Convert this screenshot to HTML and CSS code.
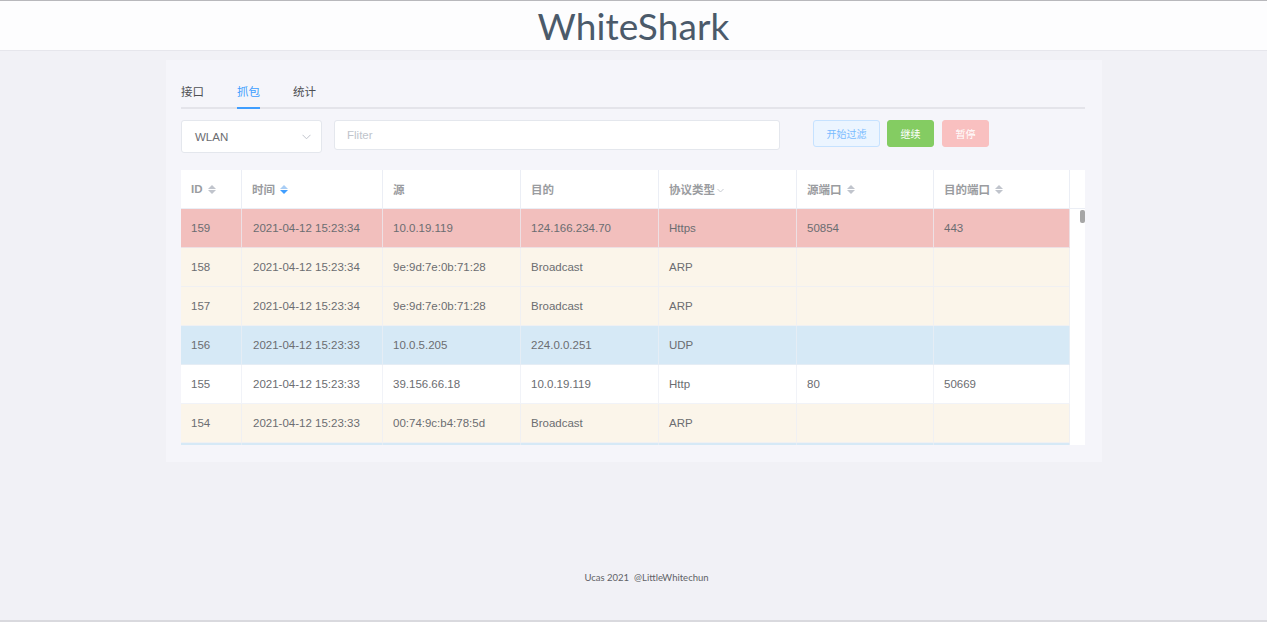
FILE: index.html
```html
<!DOCTYPE html>
<html lang="zh">
<head>
<meta charset="utf-8">
<title>WhiteShark</title>
<link rel="stylesheet" href="styles.css">
</head>
<body>
<header class="topbar">
  <h1 class="brand">WhiteShark</h1>
</header>
<main class="main">
  <section class="card">
    <nav class="tabs">
      <span class="tab">接口</span>
      <span class="tab active">抓包</span>
      <span class="tab">统计</span>
    </nav>
    <div class="toolbar">
      <div class="select">
        <span>WLAN</span>
        <svg class="chev" width="9" height="6" viewBox="0 0 9 6"><path d="M0.5 0.8 L4.5 4.8 L8.5 0.8" fill="none" stroke="#c0c4cc" stroke-width="1"/></svg>
      </div>
      <div class="input"><span class="ph">Fliter</span></div>
      <button class="btn btn-filter">开始过滤</button>
      <button class="btn btn-go">继续</button>
      <button class="btn btn-stop">暂停</button>
    </div>
    <div class="table">
      <div class="thead">
        <div class="th c1">ID <i class="sort"><b class="up"></b><b class="down"></b></i></div>
        <div class="th c2">时间 <i class="sort"><b class="up"></b><b class="down on"></b></i></div>
        <div class="th c3">源</div>
        <div class="th c4">目的</div>
        <div class="th c5">协议类型<svg class="fchev" width="7" height="5" viewBox="0 0 7 5"><path d="M0.5 1 L3.5 4 L6.5 1" fill="none" stroke="#c0c4cc" stroke-width="0.9"/></svg></div>
        <div class="th c6">源端口 <i class="sort"><b class="up"></b><b class="down"></b></i></div>
        <div class="th c7">目的端口 <i class="sort"><b class="up"></b><b class="down"></b></i></div>
        <div class="th gutter"></div>
      </div>
      <div class="tbody-wrap">
        <div class="tbody">
          <div class="tr red"><div class="td c1">159</div><div class="td c2">2021-04-12 15:23:34</div><div class="td c3">10.0.19.119</div><div class="td c4">124.166.234.70</div><div class="td c5">Https</div><div class="td c6">50854</div><div class="td c7">443</div></div>
          <div class="tr cream"><div class="td c1">158</div><div class="td c2">2021-04-12 15:23:34</div><div class="td c3">9e:9d:7e:0b:71:28</div><div class="td c4">Broadcast</div><div class="td c5">ARP</div><div class="td c6"></div><div class="td c7"></div></div>
          <div class="tr cream"><div class="td c1">157</div><div class="td c2">2021-04-12 15:23:34</div><div class="td c3">9e:9d:7e:0b:71:28</div><div class="td c4">Broadcast</div><div class="td c5">ARP</div><div class="td c6"></div><div class="td c7"></div></div>
          <div class="tr blue"><div class="td c1">156</div><div class="td c2">2021-04-12 15:23:33</div><div class="td c3">10.0.5.205</div><div class="td c4">224.0.0.251</div><div class="td c5">UDP</div><div class="td c6"></div><div class="td c7"></div></div>
          <div class="tr white"><div class="td c1">155</div><div class="td c2">2021-04-12 15:23:33</div><div class="td c3">39.156.66.18</div><div class="td c4">10.0.19.119</div><div class="td c5">Http</div><div class="td c6">80</div><div class="td c7">50669</div></div>
          <div class="tr cream"><div class="td c1">154</div><div class="td c2">2021-04-12 15:23:33</div><div class="td c3">00:74:9c:b4:78:5d</div><div class="td c4">Broadcast</div><div class="td c5">ARP</div><div class="td c6"></div><div class="td c7"></div></div>
          <div class="tr blue"><div class="td c1"></div><div class="td c2"></div><div class="td c3"></div><div class="td c4"></div><div class="td c5"></div><div class="td c6"></div><div class="td c7"></div></div>
        </div>
        <div class="track"><div class="thumb"></div></div>
      </div>
    </div>
  </section>
</main>
<footer class="footer"><span>Ucas 2021</span><span class="handle">@LittleWhitechun</span></footer>
</body>
</html>
```
FILE: styles.css
```css
* { box-sizing: border-box; }
html, body { margin: 0; padding: 0; }
body {
  height: 622px;
  background: #f1f1f6;
  border-top: 1px solid #b8b8bc;
  border-bottom: 2px solid #d9d9de;
  display: flex;
  flex-direction: column;
  font-family: "Liberation Sans", "Noto Sans CJK SC", sans-serif;
  color: #606266;
}
.topbar {
  height: 50px;
  background: #fdfdfe;
  border-bottom: 1px solid #e6e6ec;
  display: flex;
  justify-content: center;
  align-items: center;
}
.brand {
  margin: 0;
  font-family: Lato, "Open Sans", sans-serif;
  font-weight: 400;
  font-size: 37px;
  line-height: 46px;
  color: #4b5a6a;
  letter-spacing: 0.1px;
}
.main {
  padding-top: 9px;
  display: flex;
  justify-content: center;
}
.card {
  width: 936px;
  margin-left: 1px;
  background: #f5f5fa;
  padding: 17px 17px 17px 15px;
}
.tabs {
  display: flex;
  height: 32px;
  border-bottom: 2px solid #e4e4ea;
  font-size: 11.5px;
}
.tab {
  line-height: 30px;
  height: 32px;
  margin-right: 33px;
  color: #4d4f53;
  margin-bottom: -2px;
  border-bottom: 2px solid transparent;
}
.tab.active {
  color: #409eff;
  border-bottom-color: #409eff;
}
.toolbar {
  display: flex;
  align-items: flex-start;
  margin-top: 11px;
}
.select {
  width: 141px;
  height: 33px;
  background: #fff;
  border: 1px solid #e4e7ed;
  border-radius: 3px;
  display: flex;
  align-items: center;
  justify-content: space-between;
  padding: 0 10px 0 13px;
  font-size: 11.5px;
  color: #6b6d71;
}
.chev { margin-top: 1px; }
.input {
  width: 446px;
  height: 30px;
  margin-left: 12px;
  background: #fff;
  border: 1px solid #e4e7ed;
  border-radius: 3px;
  display: flex;
  align-items: center;
  padding-left: 12px;
  font-size: 11.5px;
}
.ph { color: #c0c4cc; }
.btn {
  height: 27px;
  border-radius: 3px;
  font-family: "Liberation Sans", "Noto Sans CJK SC", sans-serif;
  font-size: 10px;
  padding: 0;
  cursor: pointer;
}
.btn-filter {
  width: 67px;
  margin-left: 33px;
  background: #ecf5ff;
  border: 1px solid #c6e2ff;
  color: #79bbff;
}
.btn-go {
  width: 47px;
  margin-left: 7px;
  background: #84cc62;
  border: 1px solid #84cc62;
  color: #fff;
}
.btn-stop {
  width: 47px;
  margin-left: 8px;
  background: #f9c0c0;
  border: 1px solid #f9c0c0;
  color: #fff;
}
.table {
  margin-top: 17px;
  width: 904px;
  background: #fff;
  font-size: 11.5px;
}
.thead {
  display: flex;
  height: 39px;
}
.th {
  height: 39px;
  display: flex;
  align-items: center;
  padding-left: 10px;
  font-weight: 700;
  color: #9a9ca0;
  border-right: 1px solid #ebeef5;
  border-bottom: 1px solid #ebeef5;
  white-space: nowrap;
}
.th.gutter { width: 15px; border-right: none; padding: 0; }
.c1 { width: 61px; }
.c2 { width: 141px; }
.c3 { width: 138px; }
.c4 { width: 138px; }
.c5 { width: 138px; }
.c6 { width: 137px; }
.c7 { width: 136px; }
.td.c2 { padding-left: 11px; }
.sort {
  display: inline-flex;
  flex-direction: column;
  margin-left: 5px;
  gap: 1px;
}
.sort b {
  display: block;
  width: 0;
  height: 0;
  border-left: 4px solid transparent;
  border-right: 4px solid transparent;
}
.sort .up { border-bottom: 4px solid #c0c4cc; }
.sort .down { border-top: 4px solid #c0c4cc; }
.sort .down.on { border-top-color: #409eff; }
.th.c2 .sort .up { border-bottom-color: #a8cdf5; }
.fchev { margin-left: 2px; margin-top: 2px; }
.tbody-wrap {
  display: flex;
  height: 236px;
  overflow: hidden;
}
.tbody { width: 889px; }
.tr {
  display: flex;
  height: 39px;
  color: #6b6d71;
}
.td {
  height: 39px;
  display: flex;
  align-items: center;
  padding-left: 10px;
  border-right: 1px solid rgba(235, 238, 245, 0.7);
  border-bottom: 1px solid rgba(235, 238, 245, 0.7);
  white-space: nowrap;
}
.tr.red { background: #f2bfbd; }
.tr.cream { background: #fbf5ea; }
.tr.blue { background: #d6e9f6; }
.tr.white { background: #fff; }
.track {
  width: 15px;
  background: #fff;
  padding-top: 1px;
}
.thumb {
  width: 5px;
  height: 13px;
  margin-left: 10px;
  border-radius: 2px;
  background: #a6a6a6;
}
.footer {
  margin-top: auto;
  padding-bottom: 35px;
  padding-left: 26px;
  text-align: center;
  font-family: Lato, "Open Sans", sans-serif;
  font-size: 9.5px;
  line-height: 14px;
  color: #5f6266;
}
.handle { margin-left: 5px; }
```
